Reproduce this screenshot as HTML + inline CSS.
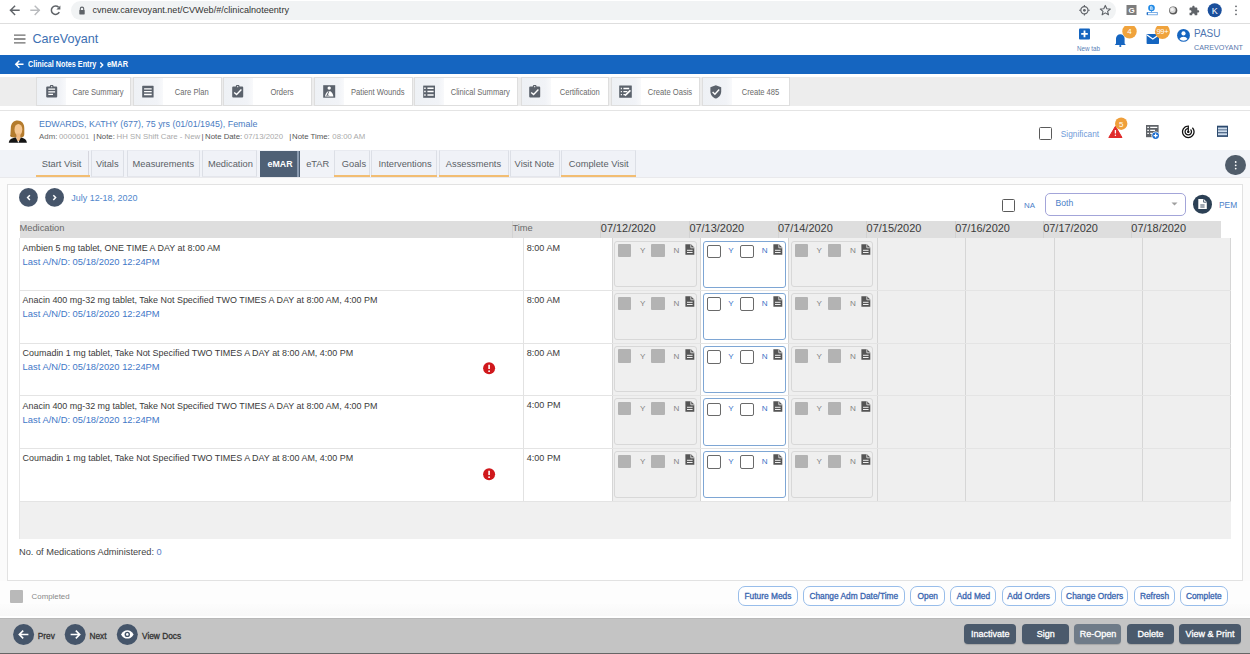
<!DOCTYPE html>
<html><head><meta charset="utf-8">
<style>
*{box-sizing:border-box;margin:0;padding:0}
html,body{width:1250px;height:654px;overflow:hidden;background:#fff;font-family:"Liberation Sans",sans-serif;color:#333}
.a{position:absolute}
.t{position:absolute;white-space:nowrap;line-height:1}
/* chrome */
#chrome{left:0;top:0;width:1250px;height:23.5px;background:#fff;border-bottom:1px solid #dedede}
#pill{left:71px;top:1px;width:1045px;height:19px;border-radius:10px;background:#f1f3f4}
/* header */
#hdr{left:0;top:23.5px;width:1250px;height:86.5px;background:#fff}
#blue{left:0;top:55px;width:1250px;height:19px;background:#1565c0}
#tool{left:0;top:77px;width:1250px;height:29px;background:#ededed}
.tb{position:absolute;top:77px;height:28.5px;background:#fff;border:1px solid #dedede}
.tb .ic{position:absolute;left:0;top:0;width:29px;height:27px;background:linear-gradient(90deg,#eef1f5,#f1f3f7 80%,#f8f9fb)}
.tb .tx{position:absolute;left:29px;right:0;top:9.6px;text-align:center;font-size:8.7px;color:#6a6a6a;line-height:1;transform:scaleX(.875)}
#pat{left:0;top:109.5px;width:1250px;height:40.5px;background:#fff;border-top:1px solid #e4e4e4}
#tabs{left:0;top:150px;width:1250px;height:28px;background:#f1f3f8;border-bottom:1px solid #e9e9ec}
.tab{position:absolute;top:151px;height:26px;font-size:9.3px;color:#555;line-height:1}
.tab span{position:absolute;top:9px}
#gap{left:0;top:178px;width:1250px;height:440px;background:#fbfbfb}
#panel{left:6.5px;top:184px;width:1236.5px;height:396.5px;background:#fff;border:1px solid #e2e2e2}
#bot{left:0;top:617.5px;width:1250px;height:36.5px;background:#c4c4c4;border-top:1px solid #b8b8b8;border-bottom:1.5px solid #666}
.ob{position:absolute;top:586.2px;height:19.4px;border:1px solid #98bdea;border-radius:7px;background:#fff;color:#3a66b0;font-size:8.35px;-webkit-text-stroke:.3px #3a66b0;text-align:center;line-height:18.4px;letter-spacing:0}
.db{position:absolute;top:624.2px;height:20px;border-radius:4px;background:#4b5a6c;color:#fff;font-size:9px;-webkit-text-stroke:.3px #fff;text-align:center;line-height:20px;box-shadow:0 1px 1px rgba(0,0,0,.15)}
</style></head><body>
<div id="chrome" class="a"></div>
<div id="pill" class="a"></div>
<div id="hdr" class="a"></div>
<div id="blue" class="a"></div>
<div id="tool" class="a"></div>
<div id="pat" class="a"></div>
<div id="tabs" class="a"></div>
<div id="gap" class="a"></div>
<div id="panel" class="a"></div>
<div class="a" style="left:0;top:581px;width:1250px;height:23px;background:#fdfdfd"></div>
<div class="a" style="left:0;top:604px;width:1250px;height:12px;background:linear-gradient(#fcfcfc,#f8f8f8)"></div>
<div class="a" style="left:0;top:616px;width:1250px;height:1.5px;background:#fff"></div>
<div id="bot" class="a"></div>

<!-- chrome icons -->
<svg class="a" style="left:0;top:0" width="70" height="22" viewBox="0 0 70 22">
 <g fill="none" stroke="#5f6368" stroke-width="1.4" stroke-linecap="square">
  <path d="M10.5 10.3H19M14.6 6.2L10.5 10.3L14.6 14.4"/>
 </g>
 <g fill="none" stroke="#b9bbbe" stroke-width="1.4" stroke-linecap="square">
  <path d="M31 10.3H39.3M35.2 6.2L39.3 10.3L35.2 14.4"/>
 </g>
 <g fill="none" stroke="#5f6368" stroke-width="1.5">
  <path d="M59.3 12.2A4.2 4.2 0 1 1 58.6 7.3"/>
 </g>
 <path d="M60.4 5.6V9.6H56.4Z" fill="#5f6368"/>
</svg>
<svg class="a" style="left:78px;top:6px" width="8" height="9" viewBox="0 0 8 9">
 <path d="M2.3 4V2.8A1.7 1.7 0 0 1 5.7 2.8V4" fill="none" stroke="#5f6368" stroke-width="1.1"/>
 <rect x="1.3" y="4" width="5.4" height="4.4" rx="0.6" fill="#5f6368"/>
</svg>
<div class="t" style="left:92.5px;top:6px;font-size:9.1px;color:#333">cvnew.carevoyant.net/CVWeb/#/clinicalnoteentry</div>
<svg class="a" style="left:1076px;top:2px" width="170" height="18" viewBox="0 0 170 18">
 <circle cx="8.4" cy="8.3" r="3.6" fill="none" stroke="#5f6368" stroke-width="1.2"/>
 <circle cx="8.4" cy="8.3" r="1.4" fill="#5f6368"/>
 <path d="M8.4 3V4.6M8.4 12V13.6M3.1 8.3H4.7M12.1 8.3H13.7" stroke="#5f6368" stroke-width="1.1"/>
 <path d="M29.3 3.4L30.8 6.7L34.3 7L31.6 9.3L32.5 12.8L29.3 10.9L26.1 12.8L27 9.3L24.3 7L27.8 6.7Z" fill="none" stroke="#5f6368" stroke-width="1.1" stroke-linejoin="round"/>
 <rect x="50.5" y="3" width="10" height="10" fill="#7d7d7d"/>
 <text x="55.5" y="11.3" font-size="8" font-family="Liberation Sans" font-weight="bold" fill="#fff" text-anchor="middle">G</text>
 <circle cx="75.5" cy="6" r="3.3" fill="#1e88e5"/>
 <path d="M74.5 4.5h1.3a.8.8 0 0 1 0 1.5h-1.3zM74.5 6h1.5a.8.8 0 0 1 0 1.6h-1.5z" fill="none" stroke="#fff" stroke-width=".6"/>
 <path d="M75.5 9.3V10.3" stroke="#1e88e5" stroke-width="1"/>
 <rect x="71.3" y="10.4" width="10" height="2.4" fill="none" stroke="#5b9ae0" stroke-width=".8"/>
 <path d="M71.3 10.4V12.8" stroke="#1565c0" stroke-width="1.2"/>
 <circle cx="97.2" cy="8.5" r="4.1" fill="#5a5a5a"/>
 <circle cx="96.7" cy="8" r="3" fill="#d9d9d9"/>
 <circle cx="96.2" cy="7.5" r="1.6" fill="#f4f4f4"/>
 <g transform="translate(112.6,3.2) scale(0.46)"><path d="M20.5 11H19V7c0-1.1-.9-2-2-2h-4V3.5C13 2.12 11.88 1 10.5 1S8 2.12 8 3.5V5H4c-1.1 0-1.99.9-1.99 2v3.8H3.5c1.49 0 2.7 1.21 2.7 2.7s-1.21 2.7-2.7 2.7H2V20c0 1.1.9 2 2 2h3.8v-1.5c0-1.49 1.21-2.7 2.7-2.7 1.49 0 2.7 1.21 2.7 2.7V22H17c1.1 0 2-.9 2-2v-4h1.5c1.38 0 2.5-1.12 2.5-2.5S21.88 11 20.5 11z" fill="#5f6368"/></g>
 <circle cx="138.7" cy="8.3" r="7" fill="#1a4f9c"/>
 <text x="138.7" y="11.6" font-size="9" font-family="Liberation Sans" fill="#fff" text-anchor="middle">K</text>
 <circle cx="160" cy="4.3" r="0.9" fill="#5f6368"/><circle cx="160" cy="8.3" r="0.9" fill="#5f6368"/><circle cx="160" cy="12.3" r="0.9" fill="#5f6368"/>
</svg>

<!-- header -->
<svg class="a" style="left:13px;top:33px" width="14" height="12" viewBox="0 0 14 12">
 <path d="M1 2.2H12.5M1 6H12.5M1 9.8H12.5" stroke="#6d6d6d" stroke-width="1.3"/>
</svg>
<div class="t" style="left:32.5px;top:33px;font-size:12.6px;color:#3d70b2">CareVoyant</div>

<svg class="a" style="left:1076px;top:26px" width="170" height="30" viewBox="0 0 170 30">
 <rect x="3" y="2.4" width="11" height="11" rx="1" fill="#1565c0"/>
 <path d="M8.5 4.6V11.2M5.2 7.9H11.8" stroke="#fff" stroke-width="1.8"/>
 <path d="M40 17.5V12.5A4.3 4.3 0 0 1 48.6 12.5V17.5L49.8 19H38.8Z" fill="#1565c0"/>
 <circle cx="44.3" cy="20" r="1.1" fill="#1565c0"/>
 <circle cx="53.5" cy="5.4" r="7.2" fill="#f0a33c"/>
 <text x="53.5" y="8.2" font-size="8" font-family="Liberation Sans" fill="#fff" text-anchor="middle">4</text>
 <rect x="70.6" y="8" width="12.4" height="10" rx="0.8" fill="#1565c0"/>
 <path d="M71 9L76.8 13L82.6 9" stroke="#fff" stroke-width="1.3" fill="none"/>
 <circle cx="86.4" cy="5.4" r="7.5" fill="#f0a33c"/>
 <text x="86.4" y="8.1" font-size="7.6" font-family="Liberation Sans" fill="#fff" text-anchor="middle" letter-spacing="-0.3">99+</text>
 <circle cx="107.5" cy="9.4" r="6.4" fill="#1565c0"/>
 <circle cx="107.5" cy="7.4" r="2.1" fill="#fff"/>
 <path d="M103.4 12.9A4.9 4.9 0 0 1 111.6 12.9A5.5 5.5 0 0 1 103.4 12.9Z" fill="#fff"/>
</svg>
<div class="t" style="left:1077px;top:45.5px;font-size:6.3px;color:#5a7fb8">New tab</div>
<div class="t" style="left:1194px;top:29px;font-size:10px;color:#4e75b0">PASU</div>
<div class="t" style="left:1194px;top:43.5px;font-size:7.2px;color:#5878ad">CAREVOYANT</div>

<!-- breadcrumb -->
<svg class="a" style="left:13px;top:59px" width="12" height="11" viewBox="0 0 12 11">
 <path d="M3 5.3H10.5M6.3 1.8L2.8 5.3L6.3 8.8" fill="none" stroke="#fff" stroke-width="1.5"/>
</svg>
<div class="t" style="left:28px;top:59.9px;font-size:8.9px;font-weight:bold;color:#fff;transform:scaleX(.815);transform-origin:0 0">Clinical Notes Entry</div>
<svg class="a" style="left:98px;top:60px" width="7" height="10" viewBox="0 0 7 10">
 <path d="M2.3 2.6L4.7 5L2.3 7.4" fill="none" stroke="#fff" stroke-width="1.4"/>
</svg>
<div class="t" style="left:106.5px;top:59.9px;font-size:8.9px;font-weight:bold;color:#fff;transform:scaleX(.835);transform-origin:0 0">eMAR</div>
<!-- toolbar -->
<div class="tb" style="left:36px;width:95px"><div class="ic"></div><div class="tx">Care Summary</div></div>
<svg class="a" style="left:45.6px;top:85px" width="14" height="14" viewBox="0 0 14 14"><path d="M1.2 1.6H3.8A1.9 1.9 0 0 1 7.6 1.6H10.2A1 1 0 0 1 11.2 2.6V11.6A1 1 0 0 1 10.2 12.6H1.2A1 1 0 0 1 .2 11.6V2.6A1 1 0 0 1 1.2 1.6Z" fill="#5b626c"/><circle cx="5.7" cy="1.7" r=".6" fill="#fff"/><path d="M2.3 4.2H9.1M2.3 6.8H9.1M2.3 9.4H7" stroke="#fff" stroke-width="1.2"/></svg>
<div class="tb" style="left:133px;width:88.5px"><div class="ic"></div><div class="tx">Care Plan</div></div>
<svg class="a" style="left:141.8px;top:85px" width="14" height="14" viewBox="0 0 14 14"><rect x=".2" y=".8" width="11.4" height="11.8" rx=".6" fill="#5b626c"/><path d="M2.1 3.9H9.7M2.1 6.7H9.7M2.1 9.5H9.7" stroke="#fff" stroke-width="1.3"/></svg>
<div class="tb" style="left:223px;width:89px"><div class="ic"></div><div class="tx">Orders</div></div>
<svg class="a" style="left:232.4px;top:85px" width="14" height="14" viewBox="0 0 14 14"><path d="M1.2 1.6H3.8A1.9 1.9 0 0 1 7.6 1.6H10.2A1 1 0 0 1 11.2 2.6V11.6A1 1 0 0 1 10.2 12.6H1.2A1 1 0 0 1 .2 11.6V2.6A1 1 0 0 1 1.2 1.6Z" fill="#5b626c"/><circle cx="5.7" cy="1.7" r=".6" fill="#fff"/><path d="M2.2 7.4L4.6 9.6L9.4 4.6" stroke="#fff" stroke-width="1.4" fill="none"/></svg>
<div class="tb" style="left:314px;width:98.5px"><div class="ic"></div><div class="tx">Patient Wounds</div></div>
<svg class="a" style="left:322.6px;top:85px" width="14" height="14" viewBox="0 0 14 14"><rect x=".2" y=".2" width="12" height="12.5" fill="#5b626c"/><circle cx="6.2" cy="3.1" r="1.7" fill="#fff"/><path d="M2 11.6C2.3 8.6 4.2 6.1 6.2 6.1C8.2 6.1 10.1 8.6 10.4 11.6Z" fill="#fff"/><path d="M6.4 5.3L3.9 10.6" stroke="#5b626c" stroke-width="1"/><path d="M3.4 11C4.2 9.8 5.6 9.9 6.2 10.8" fill="none" stroke="#5b626c" stroke-width=".8"/></svg>
<div class="tb" style="left:414px;width:103.5px"><div class="ic"></div><div class="tx">Clinical Summary</div></div>
<svg class="a" style="left:422.8px;top:85px" width="14" height="14" viewBox="0 0 14 14"><rect x=".2" y=".6" width="11.8" height="12.2" fill="#5b626c"/><path d="M1.2 3.2H2.7M1.2 6.6H2.7M1.2 10H2.7M4.4 3.2H10.6M4.4 6.6H10.6M4.4 10H10.6" stroke="#fff" stroke-width="1.5"/></svg>
<div class="tb" style="left:520.5px;width:88.5px"><div class="ic"></div><div class="tx">Certification</div></div>
<svg class="a" style="left:529.1px;top:85px" width="14" height="14" viewBox="0 0 14 14"><path d="M1.2 1.6H3.8A1.9 1.9 0 0 1 7.6 1.6H10.2A1 1 0 0 1 11.2 2.6V11.6A1 1 0 0 1 10.2 12.6H1.2A1 1 0 0 1 .2 11.6V2.6A1 1 0 0 1 1.2 1.6Z" fill="#5b626c"/><circle cx="5.7" cy="1.7" r=".6" fill="#fff"/><path d="M2.2 7.4L4.6 9.6L9.4 4.6" stroke="#fff" stroke-width="1.4" fill="none"/></svg>
<div class="tb" style="left:610.5px;width:89px"><div class="ic"></div><div class="tx">Create Oasis</div></div>
<svg class="a" style="left:619.0px;top:85px" width="14" height="14" viewBox="0 0 14 14"><rect x=".2" y=".4" width="12.6" height="12.4" rx=".4" fill="#5b626c"/><path d="M1.8 3.5H2.9M1.8 6.6H2.9M1.8 9.7H2.9M4.4 3.5H10.2M4.4 6.6H8.3M4.4 9.7H6" stroke="#fff" stroke-width="1.3"/><path d="M6 10.6L11.4 5.4" stroke="#fff" stroke-width="1.6"/></svg>
<div class="tb" style="left:701.5px;width:88px"><div class="ic"></div><div class="tx">Create 485</div></div>
<svg class="a" style="left:710.1px;top:85px" width="14" height="14" viewBox="0 0 14 14"><path d="M5.8 .2L11.2 2.2V6.4C11.2 9.7 8.9 12.5 5.8 13.6C2.7 12.5 .4 9.7 .4 6.4V2.2Z" fill="#5b626c"/><path d="M2.6 7L4.9 9.2L9.2 4.6" stroke="#fff" stroke-width="1.4" fill="none"/></svg>

<!-- patient -->
<svg class="a" style="left:7px;top:119px" width="22" height="25" viewBox="0 0 22 25">
 <path d="M3.8 9.5C3.8 3.8 6.8 1.4 10.6 1.4C14.6 1.4 17.3 4.2 17.3 9.3V15.2C17.3 17 16.3 18.4 14.3 18.6H6.5C4.4 18.4 2.8 17.2 3.4 15.4Z" fill="#b47b2d"/>
 <path d="M4.5 16C3.2 15.5 3 17.5 4.5 17.6" fill="#9a6a25"/>
 <ellipse cx="11.4" cy="10.6" rx="3.9" ry="5.7" fill="#f6c792"/>
 <path d="M9.4 14.5H13.4V22H9.4Z" fill="#f1b982"/>
 <path d="M1.8 23.8C2.1 20.6 4.4 19.1 8.8 18.5L11.3 23.8L13.9 18.5C17.6 19.1 19.7 20.6 19.9 23.8Z" fill="#141414"/>
</svg>
<div class="t" style="left:39px;top:120.4px;font-size:8.9px;color:#4a7cc2">EDWARDS, KATHY (677), 75 yrs (01/01/1945), Female</div>
<div class="t" style="left:39.1px;top:133.4px;font-size:7.8px;color:#666">Adm:</div>
<div class="t" style="left:59px;top:133.4px;font-size:7.8px;color:#aaa">0000601</div>
<div class="t" style="left:93.3px;top:133.4px;font-size:7.8px;color:#555">|</div>
<div class="t" style="left:96.2px;top:133.4px;font-size:7.8px;color:#555">Note:</div>
<div class="t" style="left:116.6px;top:133.4px;font-size:7.8px;color:#aaa">HH SN Shift Care - New</div>
<div class="t" style="left:201.5px;top:133.4px;font-size:7.8px;color:#555">|</div>
<div class="t" style="left:205px;top:133.4px;font-size:7.8px;color:#555">Note Date:</div>
<div class="t" style="left:244px;top:133.4px;font-size:7.8px;color:#aaa">07/13/2020</div>
<div class="t" style="left:289.3px;top:133.4px;font-size:7.8px;color:#555">|</div>
<div class="t" style="left:292px;top:133.4px;font-size:7.8px;color:#555">Note Time:</div>
<div class="t" style="left:332.3px;top:133.4px;font-size:7.8px;color:#aaa">08:00 AM</div>

<div class="a" style="left:1038.7px;top:127px;width:13.4px;height:13.3px;border:1.4px solid #5a5a5a;border-radius:1.5px;background:#fff"></div>
<div class="t" style="left:1060.8px;top:129.8px;font-size:8.3px;color:#6f9bd8">Significant</div>
<svg class="a" style="left:1106px;top:116px" width="130" height="26" viewBox="0 0 130 26">
 <path d="M9.4 10.3L16 21.5H2.8Z" fill="#e02a2a" stroke="#e02a2a" stroke-width="1" stroke-linejoin="round"/>
 <path d="M9.4 14V17.5" stroke="#fff" stroke-width="1.3"/><circle cx="9.4" cy="19.3" r=".7" fill="#fff"/>
 <circle cx="15.2" cy="7.7" r="6.2" fill="#ef9f3a"/>
 <text x="15.2" y="10.5" font-size="8" font-family="Liberation Sans" fill="#fff" text-anchor="middle">5</text>
 <rect x="40" y="9" width="12.6" height="12.2" fill="#5f6368"/>
 <path d="M41.3 11.3H42.9M41.3 14.3H42.9M41.3 17.3H42.9M44.2 11.3H51.3M44.2 14.3H49M44.2 17.3H46" stroke="#fff" stroke-width="1.2"/>
 <circle cx="49.6" cy="19.6" r="4.2" fill="#fff"/><circle cx="49.6" cy="19.6" r="3.4" fill="#1e6fd0"/>
 <path d="M49.6 17.6V21.6M47.6 19.6H51.6" stroke="#fff" stroke-width="1.2"/>
 <g transform="translate(74.6,8.1) scale(0.64)"><path d="M19.07 4.93l-1.41 1.41C19.1 7.79 20 9.79 20 12c0 4.42-3.58 8-8 8s-8-3.58-8-8c0-4.08 3.05-7.44 7-7.930v2.02C8.16 6.57 6 9.03 6 12c0 3.310 2.69 6 6 6s6-2.69 6-6c0-1.66-.67-3.16-1.76-4.24l-1.41 1.41C15.55 9.9 16 10.9 16 12c0 2.21-1.79 4-4 4s-4-1.79-4-4c0-1.86 1.28-3.41 3-3.86v2.14c-.6.35-1 .98-1 1.72 0 1.1.9 2 2 2s2-.9 2-2c0-.74-.4-1.38-1-1.72V2h-1C6.480 2 2 6.48 2 12s4.48 10 10 10 10-4.48 10-10c0-2.76-1.12-5.26-2.93-7.07z" fill="#111"/></g>
 <rect x="111" y="9.7" width="11" height="11.2" fill="#2c4a6e"/>
 <path d="M112 12.4H121M112 15.3H121M112 18.2H121" stroke="#cddcec" stroke-width="2"/>
</svg>
<!-- tabs -->
<div class="a" style="left:88.3px;top:150.5px;width:1px;height:26.5px;background:#d6d6de"></div>
<div class="a" style="left:35.8px;top:174.6px;width:53.8px;height:2px;background:#f2bd72"></div>
<div class="t" style="left:41.7px;top:160px;font-size:9.3px;color:#5a5f66">Start Visit</div>
<div class="a" style="left:90.7px;top:150.3px;width:33.6px;height:27px;background:#f0f2f7;border:1px solid #dcdfe6;border-top-color:#e8eaf0;border-bottom-color:#e4e6ec"></div>
<div class="t" style="left:96px;top:160px;font-size:9.3px;color:#5a5f66">Vitals</div>
<div class="a" style="left:127.2px;top:150.3px;width:72.5px;height:27px;background:#f0f2f7;border:1px solid #dcdfe6;border-top-color:#e8eaf0;border-bottom-color:#e4e6ec"></div>
<div class="t" style="left:132.6px;top:160px;font-size:9.3px;color:#5a5f66">Measurements</div>
<div class="a" style="left:202.3px;top:150.3px;width:55.0px;height:27px;background:#f0f2f7;border:1px solid #dcdfe6;border-top-color:#e8eaf0;border-bottom-color:#e4e6ec"></div>
<div class="t" style="left:207.9px;top:160px;font-size:9.3px;color:#5a5f66">Medication</div>
<div class="a" style="left:260px;top:151px;width:40px;height:25.6px;background:#4f6075"></div><div class="a" style="left:297.2px;top:151px;width:1.8px;height:25.6px;background:#8b9bb0"></div>
<div class="t" style="left:267.6px;top:160.1px;font-size:8.8px;font-weight:bold;color:#fff">eMAR</div>
<div class="a" style="left:333.5px;top:150.5px;width:1px;height:26.5px;background:#d6d6de"></div>
<div class="t" style="left:306.2px;top:160px;font-size:9.3px;color:#5a5f66">eTAR</div>
<div class="a" style="left:333.8px;top:150.3px;width:36.2px;height:27px;background:#f0f2f7;border:1px solid #dcdfe6;border-top-color:#e8eaf0;border-bottom-color:#e4e6ec"></div>
<div class="a" style="left:333.8px;top:174.6px;width:36.2px;height:2px;background:#f2bd72"></div>
<div class="t" style="left:341.8px;top:160px;font-size:9.3px;color:#5a5f66">Goals</div>
<div class="a" style="left:371.2px;top:150.3px;width:66.3px;height:27px;background:#f0f2f7;border:1px solid #dcdfe6;border-top-color:#e8eaf0;border-bottom-color:#e4e6ec"></div>
<div class="a" style="left:371.2px;top:174.6px;width:66.3px;height:2px;background:#f2bd72"></div>
<div class="t" style="left:378.4px;top:160px;font-size:9.3px;color:#5a5f66">Interventions</div>
<div class="a" style="left:439px;top:150.3px;width:69.9px;height:27px;background:#f0f2f7;border:1px solid #dcdfe6;border-top-color:#e8eaf0;border-bottom-color:#e4e6ec"></div>
<div class="a" style="left:439px;top:174.6px;width:69.9px;height:2px;background:#f2bd72"></div>
<div class="t" style="left:445.8px;top:160px;font-size:9.3px;color:#5a5f66">Assessments</div>
<div class="a" style="left:509.5px;top:150.3px;width:50.5px;height:27px;background:#f0f2f7;border:1px solid #dcdfe6;border-top-color:#e8eaf0;border-bottom-color:#e4e6ec"></div>
<div class="t" style="left:514.6px;top:160px;font-size:9.3px;color:#5a5f66">Visit Note</div>
<div class="a" style="left:560.7px;top:150.3px;width:74.9px;height:27px;background:#f0f2f7;border:1px solid #dcdfe6;border-top-color:#e8eaf0;border-bottom-color:#e4e6ec"></div>
<div class="a" style="left:560.7px;top:174.6px;width:74.9px;height:2px;background:#f2bd72"></div>
<div class="t" style="left:568.8px;top:160px;font-size:9.3px;color:#5a5f66">Complete Visit</div>

<div class="a" style="left:1225.4px;top:154.9px;width:20.5px;height:20.5px;border-radius:50%;background:#505c6a"></div>
<svg class="a" style="left:1233px;top:159px" width="6" height="13" viewBox="0 0 6 13"><circle cx="2.7" cy="3" r=".9" fill="#fff"/><circle cx="2.7" cy="6.3" r=".9" fill="#fff"/><circle cx="2.7" cy="9.6" r=".9" fill="#fff"/></svg>

<!-- main panel top -->
<svg class="a" style="left:17px;top:186px" width="52" height="24" viewBox="0 0 52 24">
 <circle cx="11.45" cy="11.45" r="9.4" fill="#46556a"/>
 <path d="M12.9 9.2L10.6 11.6L12.9 14" fill="none" stroke="#fff" stroke-width="1.5"/>
 <circle cx="37.6" cy="11.45" r="9.4" fill="#46556a"/>
 <path d="M36.3 9.2L38.6 11.6L36.3 14" fill="none" stroke="#fff" stroke-width="1.5"/>
</svg>
<div class="t" style="left:71.3px;top:194px;font-size:8.95px;color:#4f86cc">July 12-18, 2020</div>
<div class="a" style="left:1002.1px;top:199.1px;width:13.4px;height:13.4px;border:1.4px solid #5a5a5a;border-radius:1.5px;background:#fff"></div>
<div class="t" style="left:1024px;top:201.9px;font-size:7.9px;color:#4a7ec8">NA</div>
<div class="a" style="left:1045px;top:192.5px;width:141px;height:23px;border:1.2px solid #a3a5d9;border-radius:5px;background:#fff"></div>
<div class="t" style="left:1055.6px;top:198.9px;font-size:8.6px;color:#4a80c8">Both</div>
<svg class="a" style="left:1170px;top:201px" width="10" height="6" viewBox="0 0 10 6"><path d="M1.5 1.5H7.5L4.5 4.5Z" fill="#a0a0a0"/></svg>
<svg class="a" style="left:1192px;top:194px" width="22" height="22" viewBox="0 0 22 22">
 <circle cx="10.5" cy="10.2" r="9.5" fill="#2c4055"/>
 <path d="M6.3 5H11.7L14.8 8.1V15.1H6.3Z" fill="#fff"/>
 <path d="M11.6 5.3V8.2H14.5" fill="none" stroke="#2c4055" stroke-width=".8"/>
 <path d="M8.3 11H12.6M8.3 13H12.6" stroke="#2c4055" stroke-width=".9"/>
</svg>
<div class="t" style="left:1219px;top:200.9px;font-size:8.4px;color:#4a7ec8">PEM</div>
<!-- table header -->
<div class="a" style="left:19px;top:237.5px;width:1px;height:301px;background:#e6e6e6;z-index:1"></div>
<div class="a" style="left:19.5px;top:221px;width:1201.5px;height:16.5px;background:#dedede"></div>
<div class="t" style="left:19.5px;top:223.7px;font-size:9.3px;color:#6a6a6a">Medication</div>
<div class="a" style="left:511.5px;top:221px;width:1px;height:16.5px;background:#d2d2d2"></div>
<div class="t" style="left:512.4px;top:223.9px;font-size:9.3px;color:#6a6a6a">Time</div>
<div class="a" style="left:600.4px;top:221px;width:1px;height:16.5px;background:#d2d2d2"></div>
<div class="t" style="left:600.8px;top:223.2px;font-size:10.95px;color:#3a3a3a">07/12/2020</div>
<div class="a" style="left:689px;top:221px;width:1px;height:16.5px;background:#d2d2d2"></div>
<div class="t" style="left:689.4px;top:223.2px;font-size:10.95px;color:#3a3a3a">07/13/2020</div>
<div class="a" style="left:777.6px;top:221px;width:1px;height:16.5px;background:#d2d2d2"></div>
<div class="t" style="left:778.0px;top:223.2px;font-size:10.95px;color:#3a3a3a">07/14/2020</div>
<div class="a" style="left:866.2px;top:221px;width:1px;height:16.5px;background:#d2d2d2"></div>
<div class="t" style="left:866.6px;top:223.2px;font-size:10.95px;color:#3a3a3a">07/15/2020</div>
<div class="a" style="left:954.8px;top:221px;width:1px;height:16.5px;background:#d2d2d2"></div>
<div class="t" style="left:955.1999999999999px;top:223.2px;font-size:10.95px;color:#3a3a3a">07/16/2020</div>
<div class="a" style="left:1042.8px;top:221px;width:1px;height:16.5px;background:#d2d2d2"></div>
<div class="t" style="left:1043.2px;top:223.2px;font-size:10.95px;color:#3a3a3a">07/17/2020</div>
<div class="a" style="left:1130.9px;top:221px;width:1px;height:16.5px;background:#d2d2d2"></div>
<div class="t" style="left:1131.3000000000002px;top:223.2px;font-size:10.95px;color:#3a3a3a">07/18/2020</div>
<div class="a" style="left:19.5px;top:237.5px;width:1210.5px;height:263.2px;background:#efefef"></div>
<div class="a" style="left:19.5px;top:237.5px;width:592.5px;height:263.2px;background:#fff"></div>
<div class="a" style="left:700.3px;top:237.5px;width:88.2px;height:263.2px;background:#fff"></div>
<div class="a" style="left:19.5px;top:500.8px;width:1211px;height:37.8px;background:#f0f0f0"></div>
<div class="a" style="left:523px;top:237.5px;width:1px;height:263.2px;background:#e2e2e2"></div>
<div class="a" style="left:611.5px;top:237.5px;width:1px;height:263.2px;background:#d6d6d6"></div>
<div class="a" style="left:699.8px;top:237.5px;width:1px;height:263.2px;background:#d6d6d6"></div>
<div class="a" style="left:788.0px;top:237.5px;width:1px;height:263.2px;background:#d6d6d6"></div>
<div class="a" style="left:876.5px;top:237.5px;width:1px;height:263.2px;background:#d6d6d6"></div>
<div class="a" style="left:964.8px;top:237.5px;width:1px;height:263.2px;background:#d6d6d6"></div>
<div class="a" style="left:1053.8px;top:237.5px;width:1px;height:263.2px;background:#d6d6d6"></div>
<div class="a" style="left:1141.9px;top:237.5px;width:1px;height:263.2px;background:#d6d6d6"></div>
<div class="a" style="left:1229.5px;top:237.5px;width:1px;height:263.2px;background:#d6d6d6"></div>
<div class="a" style="left:19.5px;top:290.15px;width:1211px;height:1px;background:#e4e4e4"></div>
<div class="t" style="left:22.6px;top:243.62px;font-size:8.95px;color:#3a3a3a">Ambien 5 mg tablet, ONE TIME A DAY at 8:00 AM</div>
<div class="t" style="left:22.6px;top:256.74px;font-size:9.4px;color:#3f78c8">Last A/N/D: 05/18/2020 12:24PM</div>
<div class="t" style="left:526.8px;top:243.54px;font-size:9.05px;color:#3a3a3a">8:00 AM</div>
<div class="a" style="left:614.2px;top:240.50px;width:82.5px;height:46.5px;border:1px solid #d8d8d8;border-radius:3px;background:#efefef"></div>
<div class="a" style="left:618.2px;top:244.10px;width:13.3px;height:13.3px;border-radius:1px;background:#b3b3b3"></div>
<div class="a" style="left:651.3px;top:244.10px;width:13.3px;height:13.3px;border-radius:1px;background:#b3b3b3"></div>
<div class="t" style="left:640.0px;top:247.25px;font-size:8.1px;color:#858585">Y</div>
<div class="t" style="left:673.4px;top:247.25px;font-size:8.1px;color:#858585">N</div>
<svg class="a" style="left:684.6px;top:243.50px" width="10" height="11" viewBox="0 0 10 11"><path d="M.4 .3H6L9.3 3.6V10.7H.4Z" fill="#555"/><path d="M5.8 .3V3.8H9.3" fill="none" stroke="#efefef" stroke-width=".8"/><path d="M2 6.3H7.6M2 8.5H7.6" stroke="#efefef" stroke-width="1"/></svg>
<div class="a" style="left:702.8px;top:240.50px;width:83.5px;height:47.2px;border:1.2px solid #7ea6d4;border-radius:3px;background:#fff"></div>
<div class="a" style="left:706.7px;top:244.80px;width:14px;height:13.5px;border:1.6px solid #6a6a6a;border-radius:2px"></div>
<div class="a" style="left:739.9px;top:244.80px;width:14px;height:13.5px;border:1.6px solid #6a6a6a;border-radius:2px"></div>
<div class="t" style="left:728.3px;top:247.25px;font-size:8.1px;color:#3f74c8">Y</div>
<div class="t" style="left:761.7px;top:247.25px;font-size:8.1px;color:#3f74c8">N</div>
<svg class="a" style="left:772.9px;top:243.50px" width="10" height="11" viewBox="0 0 10 11"><path d="M.4 .3H6L9.3 3.6V10.7H.4Z" fill="#555"/><path d="M5.8 .3V3.8H9.3" fill="none" stroke="#efefef" stroke-width=".8"/><path d="M2 6.3H7.6M2 8.5H7.6" stroke="#efefef" stroke-width="1"/></svg>
<div class="a" style="left:790.7px;top:240.50px;width:82.5px;height:46.5px;border:1px solid #d8d8d8;border-radius:3px;background:#efefef"></div>
<div class="a" style="left:794.7px;top:244.10px;width:13.3px;height:13.3px;border-radius:1px;background:#b3b3b3"></div>
<div class="a" style="left:827.8px;top:244.10px;width:13.3px;height:13.3px;border-radius:1px;background:#b3b3b3"></div>
<div class="t" style="left:816.5px;top:247.25px;font-size:8.1px;color:#858585">Y</div>
<div class="t" style="left:849.9px;top:247.25px;font-size:8.1px;color:#858585">N</div>
<svg class="a" style="left:861.1px;top:243.50px" width="10" height="11" viewBox="0 0 10 11"><path d="M.4 .3H6L9.3 3.6V10.7H.4Z" fill="#555"/><path d="M5.8 .3V3.8H9.3" fill="none" stroke="#efefef" stroke-width=".8"/><path d="M2 6.3H7.6M2 8.5H7.6" stroke="#efefef" stroke-width="1"/></svg>
<div class="a" style="left:19.5px;top:342.80px;width:1211px;height:1px;background:#e4e4e4"></div>
<div class="t" style="left:22.6px;top:296.27px;font-size:8.95px;color:#3a3a3a">Anacin 400 mg-32 mg tablet, Take Not Specified TWO TIMES A DAY at 8:00 AM, 4:00 PM</div>
<div class="t" style="left:22.6px;top:309.39px;font-size:9.4px;color:#3f78c8">Last A/N/D: 05/18/2020 12:24PM</div>
<div class="t" style="left:526.8px;top:296.19px;font-size:9.05px;color:#3a3a3a">8:00 AM</div>
<div class="a" style="left:614.2px;top:293.15px;width:82.5px;height:46.5px;border:1px solid #d8d8d8;border-radius:3px;background:#efefef"></div>
<div class="a" style="left:618.2px;top:296.75px;width:13.3px;height:13.3px;border-radius:1px;background:#b3b3b3"></div>
<div class="a" style="left:651.3px;top:296.75px;width:13.3px;height:13.3px;border-radius:1px;background:#b3b3b3"></div>
<div class="t" style="left:640.0px;top:299.90px;font-size:8.1px;color:#858585">Y</div>
<div class="t" style="left:673.4px;top:299.90px;font-size:8.1px;color:#858585">N</div>
<svg class="a" style="left:684.6px;top:296.15px" width="10" height="11" viewBox="0 0 10 11"><path d="M.4 .3H6L9.3 3.6V10.7H.4Z" fill="#555"/><path d="M5.8 .3V3.8H9.3" fill="none" stroke="#efefef" stroke-width=".8"/><path d="M2 6.3H7.6M2 8.5H7.6" stroke="#efefef" stroke-width="1"/></svg>
<div class="a" style="left:702.8px;top:293.15px;width:83.5px;height:47.2px;border:1.2px solid #7ea6d4;border-radius:3px;background:#fff"></div>
<div class="a" style="left:706.7px;top:297.45px;width:14px;height:13.5px;border:1.6px solid #6a6a6a;border-radius:2px"></div>
<div class="a" style="left:739.9px;top:297.45px;width:14px;height:13.5px;border:1.6px solid #6a6a6a;border-radius:2px"></div>
<div class="t" style="left:728.3px;top:299.90px;font-size:8.1px;color:#3f74c8">Y</div>
<div class="t" style="left:761.7px;top:299.90px;font-size:8.1px;color:#3f74c8">N</div>
<svg class="a" style="left:772.9px;top:296.15px" width="10" height="11" viewBox="0 0 10 11"><path d="M.4 .3H6L9.3 3.6V10.7H.4Z" fill="#555"/><path d="M5.8 .3V3.8H9.3" fill="none" stroke="#efefef" stroke-width=".8"/><path d="M2 6.3H7.6M2 8.5H7.6" stroke="#efefef" stroke-width="1"/></svg>
<div class="a" style="left:790.7px;top:293.15px;width:82.5px;height:46.5px;border:1px solid #d8d8d8;border-radius:3px;background:#efefef"></div>
<div class="a" style="left:794.7px;top:296.75px;width:13.3px;height:13.3px;border-radius:1px;background:#b3b3b3"></div>
<div class="a" style="left:827.8px;top:296.75px;width:13.3px;height:13.3px;border-radius:1px;background:#b3b3b3"></div>
<div class="t" style="left:816.5px;top:299.90px;font-size:8.1px;color:#858585">Y</div>
<div class="t" style="left:849.9px;top:299.90px;font-size:8.1px;color:#858585">N</div>
<svg class="a" style="left:861.1px;top:296.15px" width="10" height="11" viewBox="0 0 10 11"><path d="M.4 .3H6L9.3 3.6V10.7H.4Z" fill="#555"/><path d="M5.8 .3V3.8H9.3" fill="none" stroke="#efefef" stroke-width=".8"/><path d="M2 6.3H7.6M2 8.5H7.6" stroke="#efefef" stroke-width="1"/></svg>
<div class="a" style="left:19.5px;top:395.45px;width:1211px;height:1px;background:#e4e4e4"></div>
<div class="t" style="left:22.6px;top:348.92px;font-size:8.95px;color:#3a3a3a">Coumadin 1 mg tablet, Take Not Specified TWO TIMES A DAY at 8:00 AM, 4:00 PM</div>
<div class="t" style="left:22.6px;top:362.04px;font-size:9.4px;color:#3f78c8">Last A/N/D: 05/18/2020 12:24PM</div>
<svg class="a" style="left:482.8px;top:362.40px" width="13" height="13" viewBox="0 0 13 13"><circle cx="6.1" cy="6.2" r="6" fill="#d0181c"/><path d="M6.1 2.8V7.1" stroke="#fff" stroke-width="1.6"/><circle cx="6.1" cy="9.2" r=".9" fill="#fff"/></svg>
<div class="t" style="left:526.8px;top:348.84px;font-size:9.05px;color:#3a3a3a">8:00 AM</div>
<div class="a" style="left:614.2px;top:345.80px;width:82.5px;height:46.5px;border:1px solid #d8d8d8;border-radius:3px;background:#efefef"></div>
<div class="a" style="left:618.2px;top:349.40px;width:13.3px;height:13.3px;border-radius:1px;background:#b3b3b3"></div>
<div class="a" style="left:651.3px;top:349.40px;width:13.3px;height:13.3px;border-radius:1px;background:#b3b3b3"></div>
<div class="t" style="left:640.0px;top:352.55px;font-size:8.1px;color:#858585">Y</div>
<div class="t" style="left:673.4px;top:352.55px;font-size:8.1px;color:#858585">N</div>
<svg class="a" style="left:684.6px;top:348.80px" width="10" height="11" viewBox="0 0 10 11"><path d="M.4 .3H6L9.3 3.6V10.7H.4Z" fill="#555"/><path d="M5.8 .3V3.8H9.3" fill="none" stroke="#efefef" stroke-width=".8"/><path d="M2 6.3H7.6M2 8.5H7.6" stroke="#efefef" stroke-width="1"/></svg>
<div class="a" style="left:702.8px;top:345.80px;width:83.5px;height:47.2px;border:1.2px solid #7ea6d4;border-radius:3px;background:#fff"></div>
<div class="a" style="left:706.7px;top:350.10px;width:14px;height:13.5px;border:1.6px solid #6a6a6a;border-radius:2px"></div>
<div class="a" style="left:739.9px;top:350.10px;width:14px;height:13.5px;border:1.6px solid #6a6a6a;border-radius:2px"></div>
<div class="t" style="left:728.3px;top:352.55px;font-size:8.1px;color:#3f74c8">Y</div>
<div class="t" style="left:761.7px;top:352.55px;font-size:8.1px;color:#3f74c8">N</div>
<svg class="a" style="left:772.9px;top:348.80px" width="10" height="11" viewBox="0 0 10 11"><path d="M.4 .3H6L9.3 3.6V10.7H.4Z" fill="#555"/><path d="M5.8 .3V3.8H9.3" fill="none" stroke="#efefef" stroke-width=".8"/><path d="M2 6.3H7.6M2 8.5H7.6" stroke="#efefef" stroke-width="1"/></svg>
<div class="a" style="left:790.7px;top:345.80px;width:82.5px;height:46.5px;border:1px solid #d8d8d8;border-radius:3px;background:#efefef"></div>
<div class="a" style="left:794.7px;top:349.40px;width:13.3px;height:13.3px;border-radius:1px;background:#b3b3b3"></div>
<div class="a" style="left:827.8px;top:349.40px;width:13.3px;height:13.3px;border-radius:1px;background:#b3b3b3"></div>
<div class="t" style="left:816.5px;top:352.55px;font-size:8.1px;color:#858585">Y</div>
<div class="t" style="left:849.9px;top:352.55px;font-size:8.1px;color:#858585">N</div>
<svg class="a" style="left:861.1px;top:348.80px" width="10" height="11" viewBox="0 0 10 11"><path d="M.4 .3H6L9.3 3.6V10.7H.4Z" fill="#555"/><path d="M5.8 .3V3.8H9.3" fill="none" stroke="#efefef" stroke-width=".8"/><path d="M2 6.3H7.6M2 8.5H7.6" stroke="#efefef" stroke-width="1"/></svg>
<div class="a" style="left:19.5px;top:448.10px;width:1211px;height:1px;background:#e4e4e4"></div>
<div class="t" style="left:22.6px;top:401.57px;font-size:8.95px;color:#3a3a3a">Anacin 400 mg-32 mg tablet, Take Not Specified TWO TIMES A DAY at 8:00 AM, 4:00 PM</div>
<div class="t" style="left:22.6px;top:414.69px;font-size:9.4px;color:#3f78c8">Last A/N/D: 05/18/2020 12:24PM</div>
<div class="t" style="left:526.8px;top:401.49px;font-size:9.05px;color:#3a3a3a">4:00 PM</div>
<div class="a" style="left:614.2px;top:398.45px;width:82.5px;height:46.5px;border:1px solid #d8d8d8;border-radius:3px;background:#efefef"></div>
<div class="a" style="left:618.2px;top:402.05px;width:13.3px;height:13.3px;border-radius:1px;background:#b3b3b3"></div>
<div class="a" style="left:651.3px;top:402.05px;width:13.3px;height:13.3px;border-radius:1px;background:#b3b3b3"></div>
<div class="t" style="left:640.0px;top:405.20px;font-size:8.1px;color:#858585">Y</div>
<div class="t" style="left:673.4px;top:405.20px;font-size:8.1px;color:#858585">N</div>
<svg class="a" style="left:684.6px;top:401.45px" width="10" height="11" viewBox="0 0 10 11"><path d="M.4 .3H6L9.3 3.6V10.7H.4Z" fill="#555"/><path d="M5.8 .3V3.8H9.3" fill="none" stroke="#efefef" stroke-width=".8"/><path d="M2 6.3H7.6M2 8.5H7.6" stroke="#efefef" stroke-width="1"/></svg>
<div class="a" style="left:702.8px;top:398.45px;width:83.5px;height:47.2px;border:1.2px solid #7ea6d4;border-radius:3px;background:#fff"></div>
<div class="a" style="left:706.7px;top:402.75px;width:14px;height:13.5px;border:1.6px solid #6a6a6a;border-radius:2px"></div>
<div class="a" style="left:739.9px;top:402.75px;width:14px;height:13.5px;border:1.6px solid #6a6a6a;border-radius:2px"></div>
<div class="t" style="left:728.3px;top:405.20px;font-size:8.1px;color:#3f74c8">Y</div>
<div class="t" style="left:761.7px;top:405.20px;font-size:8.1px;color:#3f74c8">N</div>
<svg class="a" style="left:772.9px;top:401.45px" width="10" height="11" viewBox="0 0 10 11"><path d="M.4 .3H6L9.3 3.6V10.7H.4Z" fill="#555"/><path d="M5.8 .3V3.8H9.3" fill="none" stroke="#efefef" stroke-width=".8"/><path d="M2 6.3H7.6M2 8.5H7.6" stroke="#efefef" stroke-width="1"/></svg>
<div class="a" style="left:790.7px;top:398.45px;width:82.5px;height:46.5px;border:1px solid #d8d8d8;border-radius:3px;background:#efefef"></div>
<div class="a" style="left:794.7px;top:402.05px;width:13.3px;height:13.3px;border-radius:1px;background:#b3b3b3"></div>
<div class="a" style="left:827.8px;top:402.05px;width:13.3px;height:13.3px;border-radius:1px;background:#b3b3b3"></div>
<div class="t" style="left:816.5px;top:405.20px;font-size:8.1px;color:#858585">Y</div>
<div class="t" style="left:849.9px;top:405.20px;font-size:8.1px;color:#858585">N</div>
<svg class="a" style="left:861.1px;top:401.45px" width="10" height="11" viewBox="0 0 10 11"><path d="M.4 .3H6L9.3 3.6V10.7H.4Z" fill="#555"/><path d="M5.8 .3V3.8H9.3" fill="none" stroke="#efefef" stroke-width=".8"/><path d="M2 6.3H7.6M2 8.5H7.6" stroke="#efefef" stroke-width="1"/></svg>
<div class="a" style="left:19.5px;top:500.75px;width:1211px;height:1px;background:#e4e4e4"></div>
<div class="t" style="left:22.6px;top:454.22px;font-size:8.95px;color:#3a3a3a">Coumadin 1 mg tablet, Take Not Specified TWO TIMES A DAY at 8:00 AM, 4:00 PM</div>
<svg class="a" style="left:482.8px;top:467.70px" width="13" height="13" viewBox="0 0 13 13"><circle cx="6.1" cy="6.2" r="6" fill="#d0181c"/><path d="M6.1 2.8V7.1" stroke="#fff" stroke-width="1.6"/><circle cx="6.1" cy="9.2" r=".9" fill="#fff"/></svg>
<div class="t" style="left:526.8px;top:454.14px;font-size:9.05px;color:#3a3a3a">4:00 PM</div>
<div class="a" style="left:614.2px;top:451.10px;width:82.5px;height:46.5px;border:1px solid #d8d8d8;border-radius:3px;background:#efefef"></div>
<div class="a" style="left:618.2px;top:454.70px;width:13.3px;height:13.3px;border-radius:1px;background:#b3b3b3"></div>
<div class="a" style="left:651.3px;top:454.70px;width:13.3px;height:13.3px;border-radius:1px;background:#b3b3b3"></div>
<div class="t" style="left:640.0px;top:457.85px;font-size:8.1px;color:#858585">Y</div>
<div class="t" style="left:673.4px;top:457.85px;font-size:8.1px;color:#858585">N</div>
<svg class="a" style="left:684.6px;top:454.10px" width="10" height="11" viewBox="0 0 10 11"><path d="M.4 .3H6L9.3 3.6V10.7H.4Z" fill="#555"/><path d="M5.8 .3V3.8H9.3" fill="none" stroke="#efefef" stroke-width=".8"/><path d="M2 6.3H7.6M2 8.5H7.6" stroke="#efefef" stroke-width="1"/></svg>
<div class="a" style="left:702.8px;top:451.10px;width:83.5px;height:47.2px;border:1.2px solid #7ea6d4;border-radius:3px;background:#fff"></div>
<div class="a" style="left:706.7px;top:455.40px;width:14px;height:13.5px;border:1.6px solid #6a6a6a;border-radius:2px"></div>
<div class="a" style="left:739.9px;top:455.40px;width:14px;height:13.5px;border:1.6px solid #6a6a6a;border-radius:2px"></div>
<div class="t" style="left:728.3px;top:457.85px;font-size:8.1px;color:#3f74c8">Y</div>
<div class="t" style="left:761.7px;top:457.85px;font-size:8.1px;color:#3f74c8">N</div>
<svg class="a" style="left:772.9px;top:454.10px" width="10" height="11" viewBox="0 0 10 11"><path d="M.4 .3H6L9.3 3.6V10.7H.4Z" fill="#555"/><path d="M5.8 .3V3.8H9.3" fill="none" stroke="#efefef" stroke-width=".8"/><path d="M2 6.3H7.6M2 8.5H7.6" stroke="#efefef" stroke-width="1"/></svg>
<div class="a" style="left:790.7px;top:451.10px;width:82.5px;height:46.5px;border:1px solid #d8d8d8;border-radius:3px;background:#efefef"></div>
<div class="a" style="left:794.7px;top:454.70px;width:13.3px;height:13.3px;border-radius:1px;background:#b3b3b3"></div>
<div class="a" style="left:827.8px;top:454.70px;width:13.3px;height:13.3px;border-radius:1px;background:#b3b3b3"></div>
<div class="t" style="left:816.5px;top:457.85px;font-size:8.1px;color:#858585">Y</div>
<div class="t" style="left:849.9px;top:457.85px;font-size:8.1px;color:#858585">N</div>
<svg class="a" style="left:861.1px;top:454.10px" width="10" height="11" viewBox="0 0 10 11"><path d="M.4 .3H6L9.3 3.6V10.7H.4Z" fill="#555"/><path d="M5.8 .3V3.8H9.3" fill="none" stroke="#efefef" stroke-width=".8"/><path d="M2 6.3H7.6M2 8.5H7.6" stroke="#efefef" stroke-width="1"/></svg>
<div class="t" style="left:19px;top:548.1px;font-size:9.24px;color:#444">No. of Medications Administered: <span style="color:#5a7fc8">0</span></div>

<!-- footer -->
<div class="a" style="left:9.7px;top:589.8px;width:13.3px;height:13px;background:#b9b9b9;border-radius:1px"></div>
<div class="t" style="left:31.6px;top:592.6px;font-size:7.86px;color:#888">Completed</div>
<div class="ob" style="left:738.3px;width:59.3px">Future Meds</div>
<div class="ob" style="left:802.8px;width:101.9px">Change Adm Date/Time</div>
<div class="ob" style="left:910.3px;width:35.0px">Open</div>
<div class="ob" style="left:950.4px;width:46.1px">Add Med</div>
<div class="ob" style="left:1001.5px;width:54.3px">Add Orders</div>
<div class="ob" style="left:1060.8px;width:67.7px">Change Orders</div>
<div class="ob" style="left:1134.2px;width:40.7px">Refresh</div>
<div class="ob" style="left:1179.8px;width:47.9px">Complete</div>
<div class="db" style="left:964.3px;width:52.1px;background:#4b5a6c">Inactivate</div>
<div class="db" style="left:1022.3px;width:46.7px;background:#4b5a6c">Sign</div>
<div class="db" style="left:1074.4px;width:47.1px;background:#6f7b88">Re-Open</div>
<div class="db" style="left:1127.3px;width:46.3px;background:#4b5a6c">Delete</div>
<div class="db" style="left:1179.3px;width:61.5px;background:#4b5a6c">View & Print</div>

<svg class="a" style="left:10px;top:621px" width="135" height="28" viewBox="0 0 135 28">
 <circle cx="13.6" cy="13.5" r="10.5" fill="#45556a"/>
 <path d="M9.6 13.5H18.4M13.2 9.6L9.3 13.5L13.2 17.4" fill="none" stroke="#fff" stroke-width="1.6"/>
 <circle cx="65.2" cy="13.5" r="10.5" fill="#45556a"/>
 <path d="M60.6 13.5H69.4M65.8 9.6L69.7 13.5L65.8 17.4" fill="none" stroke="#fff" stroke-width="1.6"/>
 <circle cx="117.3" cy="13.5" r="10.5" fill="#45556a"/>
 <path d="M111 13.4C112.8 10.2 114.9 9.2 117.3 9.2C119.7 9.2 121.8 10.2 123.6 13.4C121.8 16.6 119.7 17.6 117.3 17.6C114.9 17.6 112.8 16.6 111 13.4Z" fill="#fff"/>
 <circle cx="117.3" cy="13.4" r="2.7" fill="#45556a"/><circle cx="117.3" cy="13.4" r="1.3" fill="#fff"/>
</svg>
<div class="t" style="left:37.8px;top:631.5px;font-size:8.3px;-webkit-text-stroke:.3px #333;color:#333">Prev</div>
<div class="t" style="left:89.5px;top:631.5px;font-size:8.3px;-webkit-text-stroke:.3px #333;color:#333">Next</div>
<div class="t" style="left:142px;top:631.5px;font-size:8.3px;-webkit-text-stroke:.3px #333;color:#333">View Docs</div>
</body></html>
